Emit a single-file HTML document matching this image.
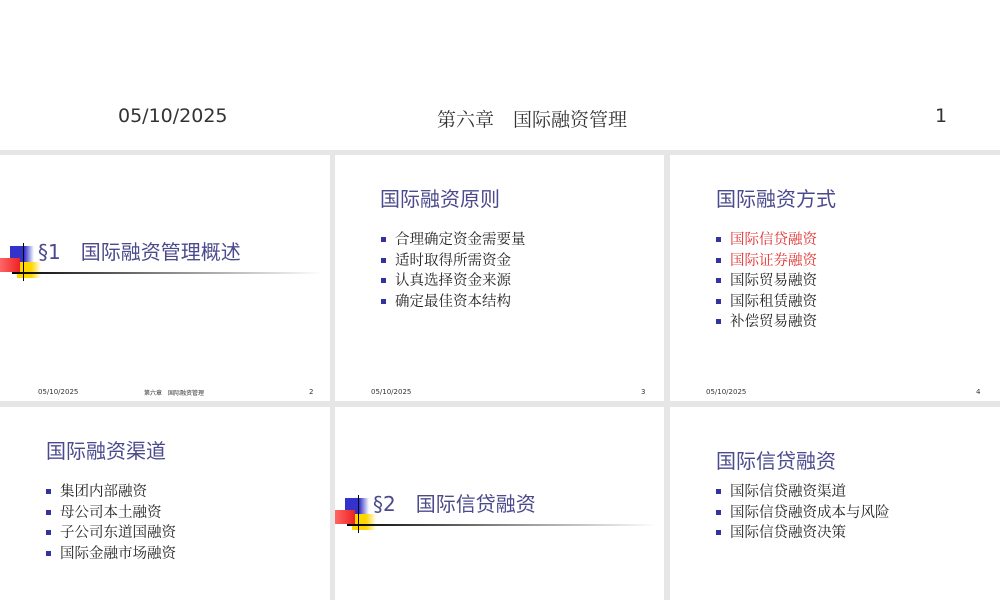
<!DOCTYPE html><html><head><meta charset="utf-8"><style>
body{margin:0;width:1000px;height:600px;background:#e6e6e6;position:relative;overflow:hidden;font-family:"DejaVu Sans","Noto Sans CJK SC",sans-serif}
.hdr{position:absolute;left:0;top:0;width:1000px;height:150px;background:#fff}
.hdr span{position:absolute;top:105px;font-size:19px;color:#333}
.s{position:absolute;background:#fff;overflow:hidden}
.t{position:absolute;font-size:20px;color:#4a4a8c;font-family:"DejaVu Sans","Noto Sans CJK SC",sans-serif}
ul{position:absolute;margin:0;padding:0;list-style:none;font-family:"Noto Serif CJK SC",serif;font-size:14.5px;color:#222}
li{height:20.5px;line-height:20.5px;position:relative;padding-left:14px}
li:before{content:"";position:absolute;left:0;top:8px;width:5px;height:5px;background:#3333a0}
.f{position:absolute;top:233px;font-size:7px;color:#333}
</style></head><body>
<div class="hdr"><span style="left:118px">05/10/2025</span><span style="left:437px;font-family:'Noto Serif CJK SC',serif">第六章　国际融资管理</span><span style="left:935px">1</span></div>

<div class="s" style="left:0;top:155px;width:330px;height:246px">
 <div style="position:absolute;left:10px;top:91px;width:24px;height:16px;background:linear-gradient(90deg,#3333cc 60%,#fff)"></div>
 <div style="position:absolute;left:17px;top:107px;width:24px;height:16px;background:linear-gradient(90deg,#ffd700 60%,#fff)"></div>
 <div style="position:absolute;left:0;top:103px;width:20px;height:14px;background:linear-gradient(90deg,#ff6666,#ee2222)"></div>
 <div style="position:absolute;left:23px;top:88px;width:1px;height:38px;background:#000"></div>
 <div style="position:absolute;left:12px;top:117px;width:310px;height:2px;background:linear-gradient(90deg,#000,#888 50%,#fff)"></div>
 <div class="t" style="left:38px;top:81px">§1　国际融资管理概述</div>
 <div class="f" style="left:38px">05/10/2025</div>
 <div class="f" style="left:144px;font-size:6px">第六章　国际融资管理</div>
 <div class="f" style="left:309px">2</div>
</div>

<div class="s" style="left:335px;top:155px;width:329px;height:246px">
 <div class="t" style="left:45px;top:28px">国际融资原则</div>
 <ul style="left:46px;top:74px"><li>合理确定资金需要量</li><li>适时取得所需资金</li><li>认真选择资金来源</li><li>确定最佳资本结构</li></ul>
 <div class="f" style="left:36px">05/10/2025</div><div class="f" style="left:306px">3</div>
</div>

<div class="s" style="left:670px;top:155px;width:330px;height:246px">
 <div class="t" style="left:46px;top:28px">国际融资方式</div>
 <ul style="left:46px;top:74px"><li style="color:#e03030">国际信贷融资</li><li style="color:#e03030">国际证券融资</li><li>国际贸易融资</li><li>国际租赁融资</li><li>补偿贸易融资</li></ul>
 <div class="f" style="left:36px">05/10/2025</div><div class="f" style="left:306px">4</div>
</div>

<div class="s" style="left:0;top:407px;width:330px;height:193px">
 <div class="t" style="left:46px;top:28px">国际融资渠道</div>
 <ul style="left:46px;top:74px"><li>集团内部融资</li><li>母公司本土融资</li><li>子公司东道国融资</li><li>国际金融市场融资</li></ul>
</div>

<div class="s" style="left:335px;top:407px;width:329px;height:193px">
 <div style="position:absolute;left:10px;top:91px;width:24px;height:16px;background:linear-gradient(90deg,#3333cc 60%,#fff)"></div>
 <div style="position:absolute;left:17px;top:107px;width:24px;height:16px;background:linear-gradient(90deg,#ffd700 60%,#fff)"></div>
 <div style="position:absolute;left:0;top:103px;width:20px;height:14px;background:linear-gradient(90deg,#ff6666,#ee2222)"></div>
 <div style="position:absolute;left:23px;top:88px;width:1px;height:38px;background:#000"></div>
 <div style="position:absolute;left:12px;top:117px;width:310px;height:2px;background:linear-gradient(90deg,#000,#888 50%,#fff)"></div>
 <div class="t" style="left:38px;top:81px">§2　国际信贷融资</div>
</div>

<div class="s" style="left:670px;top:407px;width:330px;height:193px">
 <div class="t" style="left:46px;top:38px">国际信贷融资</div>
 <ul style="left:46px;top:74px"><li>国际信贷融资渠道</li><li>国际信贷融资成本与风险</li><li>国际信贷融资决策</li></ul>
</div>
</body></html>
